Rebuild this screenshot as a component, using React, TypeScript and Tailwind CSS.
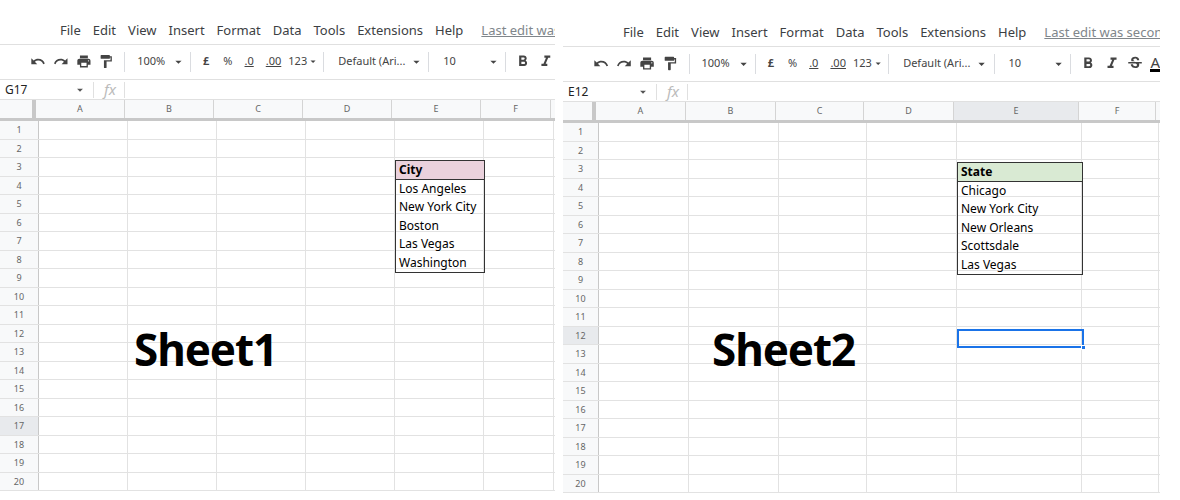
import { MdUndo, MdRedo, MdPrint, MdFormatPaint, MdFormatBold, MdFormatItalic, MdStrikethroughS, MdArrowDropDown } from "react-icons/md";

type Panel = {
  width: number;
  top: number;
  cols: number[];
  rowHead: number;
  cellRef: string;
  last: string;
  label: string;
  labelX: number;
  header: string;
  headerBg: string;
  items: string[];
  selRow?: number;
  selCol?: number;
  activeRow: number;
  wide?: boolean;
};

const letters = ["A", "B", "C", "D", "E", "F"];

function Sep() {
  return <div className="w-px h-5 bg-[#dadce0] mx-1" />;
}

function Sheet({ p }: { p: Panel }) {
  const rowH = 18.5;
  const boxLeft = p.rowHead + 1 + p.cols.slice(0, 4).reduce((a, b) => a + b, 0) - 1;
  return (
    <div className="relative overflow-hidden shrink-0 bg-white" style={{ width: p.width, paddingTop: p.top }}>
      {/* menu */}
      <div className="flex items-center h-[27px] border-b border-[#e0e0e0] text-[13px] text-[#3c4043]">
        <div className="w-[22px] h-[14px] ml-[18px] bg-[#23a566] rounded-b-[3px] -mt-[14px] relative">
          <div className="absolute left-[5px] right-[5px] top-0 h-[4px] border border-white border-t-0" />
        </div>
        <div className="flex gap-[12px] ml-[42px] whitespace-nowrap">
          {["File", "Edit", "View", "Insert", "Format", "Data", "Tools", "Extensions", "Help"].map((m) => (
            <span key={m}>{m}</span>
          ))}
          <span className="ml-[6px] underline text-[#80868b]">{p.last}</span>
        </div>
      </div>
      {/* toolbar */}
      <div className="flex items-center h-[33px] pl-[30px] text-[11px] text-[#444] whitespace-nowrap">
        <MdUndo className="w-[17px] h-[17px] mr-[7px]" />
        <MdRedo className="w-[17px] h-[17px] mr-[7px]" />
        <MdPrint className="w-[17px] h-[17px] mr-[7px]" />
        <MdFormatPaint className="w-[17px] h-[17px] mr-[6px]" />
        <Sep />
        <span className="ml-[8px]">100%</span>
        <MdArrowDropDown className="w-[16px] h-[16px] ml-[6px]" />
        <Sep />
        <span className="ml-[8px] font-bold">£</span>
        <span className="ml-[14px]">%</span>
        <span className="ml-[12px] underline">.0</span>
        <span className="ml-[12px] underline">.00</span>
        <span className="ml-[7px]">123</span>
        <MdArrowDropDown className="w-[13px] h-[13px]" />
        <Sep />
        <span className="ml-[10px]">Default (Ari...</span>
        <MdArrowDropDown className="w-[16px] h-[16px] ml-[4px]" />
        <Sep />
        <span className="ml-[10px]">10</span>
        <MdArrowDropDown className="w-[16px] h-[16px] ml-[30px]" />
        <Sep />
        <MdFormatBold className="w-[19px] h-[19px] ml-[4px]" />
        <MdFormatItalic className="w-[19px] h-[19px] ml-[6px]" />
        {p.wide && (
          <>
            <MdStrikethroughS className="w-[19px] h-[19px] ml-[5px]" />
            <span className="ml-[6px] text-[15px] border-b-[3px] border-black leading-[14px]">A</span>
          </>
        )}
      </div>
      {/* formula bar */}
      <div className="flex items-center h-[21px] border-y border-[#e0e0e0] text-[12px] text-[#222] mt-[1px]">
        <span className="ml-[5px] w-[68px]">{p.cellRef}</span>
        <MdArrowDropDown className="w-[14px] h-[14px] text-[#555]" />
        <div className="w-px h-4 bg-[#e0e0e0] ml-[6px]" />
        <span className="ml-[10px] italic text-[#bbb] text-[15px] font-['Liberation_Serif']">fx</span>
        <div className="w-px h-4 bg-[#e0e0e0] ml-[8px]" />
      </div>
      {/* grid */}
      <div className="relative text-[9px] text-[#666]">
        <div className="flex h-[21px] border-b-[3px] border-[#c8c8c8] bg-[#f8f9fa]">
          <div className="shrink-0 border-r-[4px] border-[#c8c8c8]" style={{ width: p.rowHead - 3 }} />
          {p.cols.map((w, i) => (
            <div
              key={i}
              className={`shrink-0 flex items-center justify-center border-r border-[#d4d4d4] ${p.selCol === i ? "bg-[#e8eaed]" : ""}`}
              style={{ width: w }}
            >
              {letters[i]}
            </div>
          ))}
        </div>
        {Array.from({ length: 20 }, (_, r) => (
          <div key={r} className="flex border-b border-[#e2e2e2]" style={{ height: rowH }}>
            <div
              className={`shrink-0 flex items-center justify-center border-r border-[#c8c8c8] ${p.activeRow === r + 1 ? "bg-[#e8eaed]" : "bg-[#f8f9fa]"}`}
              style={{ width: p.rowHead }}
            >
              {r + 1}
            </div>
            {p.cols.map((w, i) => (
              <div key={i} className="shrink-0 border-r border-[#e2e2e2]" style={{ width: w }} />
            ))}
          </div>
        ))}
        {/* data box in column E */}
        <div
          className="absolute border border-[#333] text-[12px] text-black font-['Liberation_Sans']"
          style={{ left: boxLeft, top: 24 + rowH * 2 - 1, width: p.cols[4] + 1 }}
        >
          <div className="pl-[3px] font-bold border-b border-[#333] flex items-center" style={{ height: rowH, background: p.headerBg }}>
            {p.header}
          </div>
          {p.items.map((it) => (
            <div key={it} className="pl-[3px] flex items-center" style={{ height: rowH }}>
              {it}
            </div>
          ))}
        </div>
        {p.selRow && (
          <div
            className="absolute border-2 border-[#1a73e8]"
            style={{ left: boxLeft, top: 24 + rowH * (p.selRow - 1) - 1, width: p.cols[4] + 2, height: rowH + 1 }}
          >
            <div className="absolute -right-[4px] -bottom-[4px] w-[5px] h-[5px] bg-[#1a73e8] border border-white" />
          </div>
        )}
      </div>
      <div
        className="absolute top-[316px] text-[44px] font-bold text-black font-['Open_Sans'] tracking-tight"
        style={{ left: p.labelX }}
      >
        {p.label}
      </div>
    </div>
  );
}

export default function App() {
  const left: Panel = {
    width: 555,
    top: 18,
    cols: [89, 89, 89, 89, 89, 70],
    rowHead: 39,
    cellRef: "G17",
    last: "Last edit was se",
    label: "Sheet1",
    labelX: 134,
    header: "City",
    headerBg: "#ead1dc",
    items: ["Los Angeles", "New York City", "Boston", "Las Vegas", "Washington"],
    activeRow: 17,
  };
  const right: Panel = {
    width: 597,
    top: 20,
    cols: [90, 90, 88, 90, 125, 77],
    rowHead: 36,
    cellRef: "E12",
    last: "Last edit was seconds ago",
    label: "Sheet2",
    labelX: 149,
    header: "State",
    headerBg: "#d9ead3",
    items: ["Chicago", "New York City", "New Orleans", "Scottsdale", "Las Vegas"],
    selRow: 12,
    selCol: 4,
    activeRow: 12,
    wide: true,
  };
  return (
    <div className="w-[1180px] h-[500px] bg-white flex gap-[8px] overflow-hidden font-['Roboto']">
      <Sheet p={left} />
      <Sheet p={right} />
    </div>
  );
}
